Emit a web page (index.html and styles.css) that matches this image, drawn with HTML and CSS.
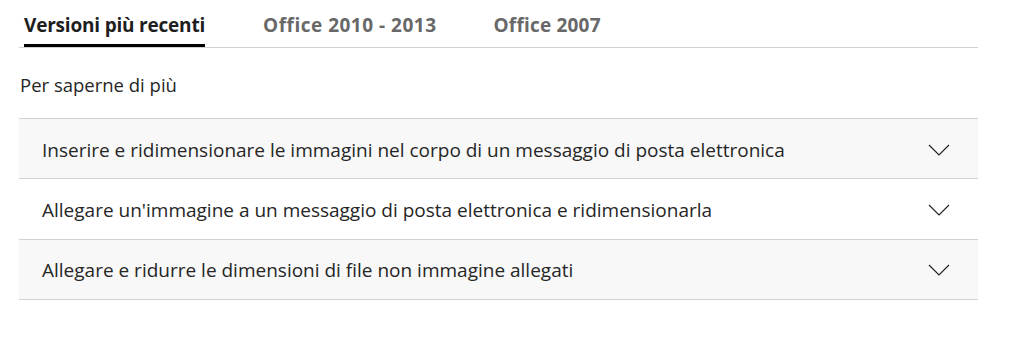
FILE: index.html
```html
<!DOCTYPE html>
<html lang="it">
<head>
    <meta charset="UTF-8">
    <title>Per saperne di più</title>
    <link rel="stylesheet" href="styles.css">
</head>
<body>
    <div class="page">
        <nav class="tabs">
            <span class="tab active">Versioni più recenti</span>
            <span class="tab">Office 2010 - 2013</span>
            <span class="tab narrow">Office 2007</span>
        </nav>
        <p class="intro">Per saperne di più</p>
        <div class="accordion">
            <div class="item shaded">
                <span>Inserire e ridimensionare le immagini nel corpo di un messaggio di posta elettronica</span>
                <svg class="chevron" width="22" height="12" viewBox="0 0 22 12"><path d="M1 1 L11 11 L21 1" fill="none" stroke="#222" stroke-width="1.2"/></svg>
            </div>
            <div class="item">
                <span>Allegare un'immagine a un messaggio di posta elettronica e ridimensionarla</span>
                <svg class="chevron" width="22" height="12" viewBox="0 0 22 12"><path d="M1 1 L11 11 L21 1" fill="none" stroke="#222" stroke-width="1.2"/></svg>
            </div>
            <div class="item shaded">
                <span>Allegare e ridurre le dimensioni di file non immagine allegati</span>
                <svg class="chevron" width="22" height="12" viewBox="0 0 22 12"><path d="M1 1 L11 11 L21 1" fill="none" stroke="#222" stroke-width="1.2"/></svg>
            </div>
        </div>
    </div>
</body>
</html>
```
FILE: styles.css
```css
body {
    margin: 0;
    font-family: "Open Sans", sans-serif;
    color: #262626;
    background: #fff;
}
.page {
    width: 959px;
    margin-left: 19px;
}
.tabs {
    display: flex;
    gap: 58px;
    border-bottom: 1px solid #d2d2d2;
    padding-left: 5px;
    height: 48px;
    box-sizing: border-box;
}
.tab {
    font-size: 19px;
    line-height: 24px;
    font-weight: 700;
    color: #686868;
    letter-spacing: 0.5px;
    padding-top: 13px;
}
.tab.narrow {
    margin-left: -1px;
    letter-spacing: 0.2px;
}
.tab.active {
    color: #1e1e1e;
    letter-spacing: -0.2px;
    border-bottom: 3px solid #000;
    height: 31px;
}
.intro {
    margin: 0;
    padding: 25px 0 21px 1px;
    font-size: 18.5px;
    line-height: 24px;
}
.accordion {
    border-top: 1px solid #d2d2d2;
}
.item {
    display: flex;
    align-items: center;
    justify-content: space-between;
    height: 60.33px;
    padding: 2px 28px 0 23px;
    box-sizing: border-box;
    border-bottom: 1px solid #d2d2d2;
    font-size: 19px;
}
.item.shaded {
    background: #f8f8f8;
}
.chevron {
    display: block;
}
```
